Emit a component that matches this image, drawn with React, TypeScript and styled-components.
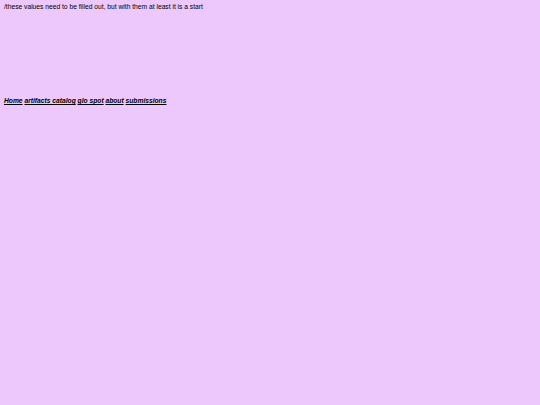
import React from 'react';
import styled, { createGlobalStyle } from 'styled-components';

const GlobalStyle = createGlobalStyle`
    html, body {
        margin: 0;
        padding: 0;
        background: #ecc8fc;
    }
    body {
        font-family: "Liberation Sans", Arial, sans-serif;
        color: #000;
    }
`;

const Page = styled.div`
    padding: 3px 4px;
`;

const Note = styled.p`
    margin: 0;
    font-size: 6.7px;
    line-height: 8px;
`;

const Header = styled.header`
    height: 94px;
`;

const Nav = styled.nav`
    font-size: 6.7px;
    line-height: 8px;
    font-weight: bold;
    font-style: italic;
`;

const NavLink = styled.a`
    color: #000;
    text-decoration: underline;
`;

const links = ['Home', 'artifacts catalog', 'glo spot', 'about', 'submissions'];

export default function App() {
    return (
        <>
            <GlobalStyle />
            <Page>
                <Header>
                    <Note>/these values need to be filled out, but with them at least it is a start</Note>
                </Header>
                <Nav>
                    {links.map((l, i) => (
                        <React.Fragment key={l}>
                            {i > 0 && ' '}
                            <NavLink href="#">{l}</NavLink>
                        </React.Fragment>
                    ))}
                </Nav>
            </Page>
        </>
    );
}
